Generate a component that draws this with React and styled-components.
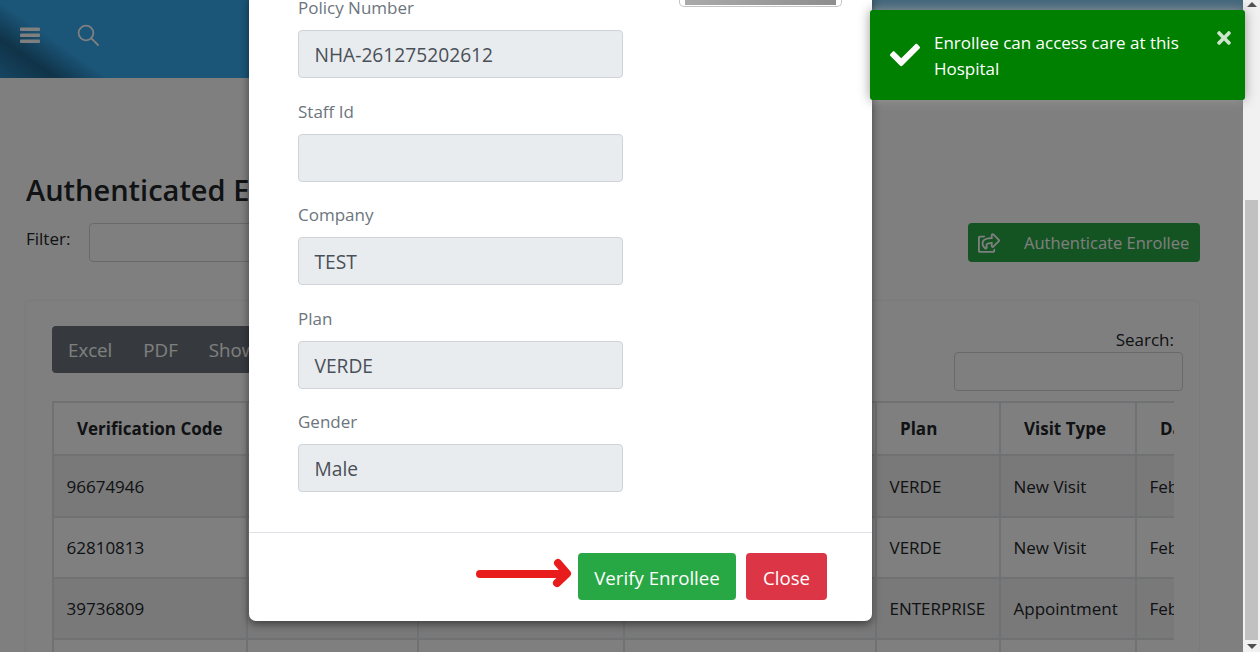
import React from 'react';
import styled, { createGlobalStyle } from 'styled-components';
import { FaCheck, FaTimes, FaRegShareSquare } from 'react-icons/fa';

const FONT = '"Open Sans", "Noto Sans", sans-serif';

const Global = createGlobalStyle`
  html, body { margin: 0; padding: 0; height: 652px; overflow: hidden; background: #fff; }
  body { font-family: ${FONT}; font-size: 16px; color: #212529; }
  * { box-sizing: border-box; }
`;

const Viewport = styled.div`
  position: relative;
  width: 1260px;
  height: 652px;
  overflow: hidden;
  display: flex;
`;
const Page = styled.div`
  width: 1243px;
  flex: none;
  height: 652px;
  overflow: hidden;
`;
const Header = styled.header`
  height: 78px;
  display: flex;
  align-items: center;
  gap: 36px;
  padding: 0 20px 9px 19px;
  background:
    linear-gradient(215deg, transparent 715px, rgba(0,0,0,.4) 745px, rgba(0,0,0,.18) 777px),
    linear-gradient(90deg, #36aaf0 0 600px, #82cdf8 870px);
  color: #fff;
`;
const IconSvg = styled.svg`
  display: block;
  flex: none;
`;
const Content = styled.main`
  padding: 95px 43px 0 26px;
`;
const Title = styled.h1`
  margin: 0 0 17px;
  height: 33px;
  font-size: 29px;
  line-height: 33px;
  font-weight: 600;
  color: #212529;
  white-space: nowrap;
`;
const FilterRow = styled.div`
  display: flex;
  align-items: center;
  justify-content: space-between;
  height: 39px;
  margin-bottom: 39px;
`;
const FilterGroup = styled.div`
  display: flex;
  align-items: center;
  gap: 19px;
`;
const FilterLabel = styled.span`
  font-size: 17px;
  color: #212529;
  margin-bottom: 9px;
`;
const TextBox = styled.div`
  width: ${p => p.$w}px;
  height: 39px;
  border: 1px solid #ced4da;
  border-radius: 4px;
  background: #fff;
`;
const AuthButton = styled.button`
  width: 232px;
  height: 39px;
  display: flex;
  align-items: center;
  gap: 24px;
  padding: 0 10px;
  border: 0;
  border-radius: 4px;
  background: #28a745;
  color: #fff;
  font: 400 16.5px ${FONT};
  white-space: nowrap;
`;
const Card = styled.section`
  width: 1173px;
  height: 400px;
  padding: 25px 25px 0 26px;
  border-radius: 4px;
  background: #fff;
  box-shadow: 0 0 3px rgba(0,0,0,.1);
`;
const CardTop = styled.div`
  display: flex;
  justify-content: space-between;
  height: 75px;
`;
const ExportGroup = styled.div`
  height: 47px;
  display: flex;
  align-items: center;
  gap: 31px;
  padding: 0 16px;
  border-radius: 4px;
  background: #6c757d;
  color: #fff;
  font-size: 18.7px;
`;
const SearchGroup = styled.div`
  width: 229px;
  margin-right: -9px;
  display: flex;
  flex-direction: column;
  align-items: flex-end;
  font-size: 17px;
  line-height: 24px;
`;
const SearchLabel = styled.span`
  margin-right: 9px;
  margin-top: 2px;
`;
const TableClip = styled.div`
  width: 1122px;
  overflow: hidden;
`;
const DataTable = styled.table`
  width: 1200px;
  table-layout: fixed;
  border-collapse: collapse;
  font-size: 17px;
  border-top: 2px solid #dee2e6;
`;
const Th = styled.th`
  height: 53px;
  padding: 0 0 0 23px;
  font-size: 17px;
  font-weight: 700;
  text-align: left;
  color: #212529;
  border: 2px solid #dee2e6;
  border-bottom: 1px solid #111;
  white-space: nowrap;
`;
const Tr = styled.tr`
  height: ${p => p.$h}px;
  background: ${p => (p.$odd ? 'rgba(0,0,0,.05)' : 'transparent')};
`;
const Td = styled.td`
  padding: 0 12px 0 12.5px;
  border: 2px solid #dee2e6;
  color: #212529;
  white-space: nowrap;
  overflow: hidden;
`;
const Track = styled.div`
  width: 17px;
  flex: none;
  height: 652px;
  background: #f1f1f1;
  display: flex;
  flex-direction: column;
  align-items: center;
  padding: 2px 0 3px;
`;
const ArrowCap = styled.div`
  width: 0;
  height: 0;
  border-left: 5px solid transparent;
  border-right: 5px solid transparent;
  ${p => (p.$down ? 'border-top: 5px solid #505050;' : 'border-bottom: 5px solid #505050;')}
`;
const Thumb = styled.div`
  width: 13px;
  height: 440px;
  margin: 193px 0 auto;
  background: #c1c1c1;
`;
const Backdrop = styled.div`
  position: absolute;
  inset: 0 17px 0 0;
  background: rgba(0,0,0,.5);
`;
const Modal = styled.div`
  position: absolute;
  left: 249px;
  bottom: 31px;
  width: 623px;
  background: #fff;
  border-radius: 0 0 7px 7px;
  box-shadow: 0 3px 9px rgba(0,0,0,.5);
`;
const ModalBody = styled.div`
  display: grid;
  grid-template-columns: 325px 163px;
  column-gap: 56px;
  padding: 0 30px 40px 49px;
`;
const Fields = styled.div`
  display: flex;
  flex-direction: column;
`;
const Field = styled.div`
  height: ${p => (p.$last ? 82 : 103.5)}px;
  display: flex;
  flex-direction: column;
`;
const FieldLabel = styled.label`
  height: 24px;
  line-height: 24px;
  margin-bottom: 10px;
  font-size: 17px;
  color: #6c757d;
`;
const ReadOnlyInput = styled.div`
  height: 48px;
  padding: 1px 15px 0 15.5px;
  display: flex;
  align-items: center;
  border: 1px solid #ced4da;
  border-radius: 4px;
  background: #e9ecef;
  color: #495057;
  font-size: 19.2px;
`;
const PhotoFrame = styled.div`
  align-self: start;
  height: 11px;
  padding: 0 5px 1px;
  border: 1px solid #c4c4c4;
  border-top: 0;
  border-radius: 0 0 5px 5px;
`;
const Photo = styled.div`
  height: 100%;
  background: linear-gradient(90deg, #aaa, #8e8e8e);
`;
const ModalFooter = styled.div`
  height: 89px;
  display: flex;
  align-items: center;
  justify-content: flex-end;
  gap: 10px;
  padding: 0 45px 1px 0;
  border-top: 1px solid #dee2e6;
`;
const ActionButton = styled.button`
  width: ${p => p.$w}px;
  height: 47px;
  padding: 2px 0 0;
  border: 0;
  border-radius: 4px;
  background: ${p => p.$bg};
  color: #fff;
  font: 400 18.7px ${FONT};
  white-space: nowrap;
`;
const Arrow = styled.svg`
  position: absolute;
  left: 474px;
  top: 558px;
`;
const Toast = styled.div`
  position: absolute;
  left: 870px;
  top: 10px;
  width: 375px;
  height: 90px;
  display: flex;
  align-items: flex-start;
  padding: 20px 11px 0 20px;
  border-radius: 3px;
  background: #008000;
  color: #fff;
  box-shadow: 0 0 12px #999;
`;
const ToastIcon = styled.div`
  flex: none;
  width: 44px;
  height: 50px;
  display: flex;
  align-items: center;
  font-size: 30px;
`;
const ToastText = styled.div`
  flex: 1;
  font-size: 17px;
  line-height: 26px;
`;
const ToastClose = styled.div`
  flex: none;
  font-size: 20px;
  line-height: 20px;
  margin-top: -2px;
  opacity: .8;
`;

const rows = [
  ['96674946', 'VERDE', 'New Visit', 'Feb', 62],
  ['62810813', 'VERDE', 'New Visit', 'Feb', 61],
  ['39736809', 'ENTERPRISE', 'Appointment', 'Feb', 61],
];
const fields = [
  ['Policy Number', 'NHA-261275202612'],
  ['Staff Id', ''],
  ['Company', 'TEST'],
  ['Plan', 'VERDE'],
  ['Gender', 'Male'],
];
const widths = [194, 171, 206, 252, 124, 136, 117];

export default function App() {
  return (
    <Viewport>
      <Global />
      <Page>
        <Header>
          <IconSvg width="22" height="16" viewBox="0 0 22 16" fill="currentColor">
            <rect x="1" y="0.5" width="20" height="3.4" rx="1" />
            <rect x="1" y="6.5" width="20" height="3.4" rx="1" />
            <rect x="1" y="12.5" width="20" height="3.4" rx="1" />
          </IconSvg>
          <IconSvg width="22" height="22" viewBox="0 0 22 22" fill="none" stroke="currentColor" strokeWidth="1.8">
            <circle cx="9" cy="9" r="7.4" />
            <path d="M14.4 14.4 L21 21" strokeLinecap="round" />
          </IconSvg>
        </Header>
        <Content>
          <Title>Authenticated Enrollees</Title>
          <FilterRow>
            <FilterGroup>
              <FilterLabel>Filter:</FilterLabel>
              <TextBox $w={300} />
            </FilterGroup>
            <AuthButton>
              <FaRegShareSquare size={22} />
              Authenticate Enrollee
            </AuthButton>
          </FilterRow>
          <Card>
            <CardTop>
              <ExportGroup>
                <span>Excel</span>
                <span>PDF</span>
                <span>Show</span>
              </ExportGroup>
              <SearchGroup>
                <SearchLabel>Search:</SearchLabel>
                <TextBox $w={229} />
              </SearchGroup>
            </CardTop>
            <TableClip>
              <DataTable>
                <colgroup>
                  {widths.map((w, i) => <col key={i} style={{ width: w }} />)}
                </colgroup>
                <thead>
                  <tr>
                    <Th>Verification Code</Th>
                    <Th />
                    <Th />
                    <Th />
                    <Th>Plan</Th>
                    <Th>Visit Type</Th>
                    <Th>Date</Th>
                  </tr>
                </thead>
                <tbody>
                  {rows.map((r, i) => (
                    <Tr key={r[0]} $odd={i % 2 === 0} $h={r[4]}>
                      <Td>{r[0]}</Td>
                      <Td />
                      <Td />
                      <Td />
                      <Td>{r[1]}</Td>
                      <Td>{r[2]}</Td>
                      <Td>{r[3]}</Td>
                    </Tr>
                  ))}
                  <Tr $odd={false} $h={61}>
                    {widths.map((w, i) => <Td key={i} />)}
                  </Tr>
                </tbody>
              </DataTable>
            </TableClip>
          </Card>
        </Content>
      </Page>
      <Track>
        <ArrowCap />
        <Thumb />
        <ArrowCap $down />
      </Track>
      <Backdrop />
      <Modal>
        <ModalBody>
          <Fields>
            {fields.map(([l, v], i) => (
              <Field key={l} $last={i === fields.length - 1}>
                <FieldLabel>{l}</FieldLabel>
                <ReadOnlyInput>{v}</ReadOnlyInput>
              </Field>
            ))}
          </Fields>
          <PhotoFrame><Photo /></PhotoFrame>
        </ModalBody>
        <ModalFooter>
          <ActionButton $bg="#28a745" $w={158}>Verify Enrollee</ActionButton>
          <ActionButton $bg="#dc3545" $w={81}>Close</ActionButton>
        </ModalFooter>
      </Modal>
      <Arrow width="100" height="32" viewBox="0 0 100 32" fill="none" stroke="#e81c1c" strokeLinecap="round" strokeLinejoin="round">
        <path d="M6 16 H90" strokeWidth="8" />
        <path d="M84 5 L93 15.5 L83 25" strokeWidth="8" />
      </Arrow>
      <Toast>
        <ToastIcon><FaCheck /></ToastIcon>
        <ToastText>Enrollee can access care at this Hospital</ToastText>
        <ToastClose><FaTimes /></ToastClose>
      </Toast>
    </Viewport>
  );
}
